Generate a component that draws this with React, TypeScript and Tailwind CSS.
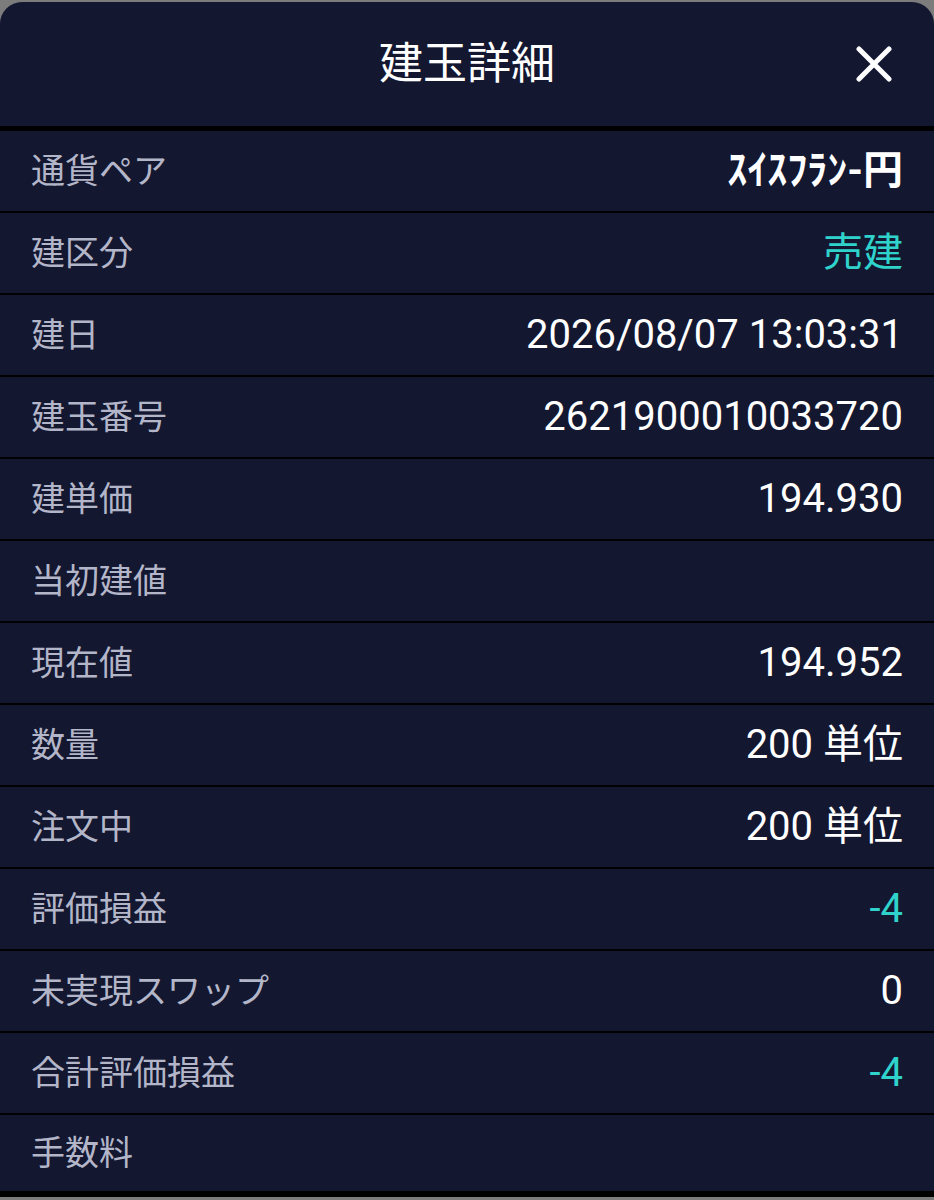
const rows: { label: string; value?: string; tone?: "white" | "cyan" | "pair" }[] = [
  { label: "通貨ペア", value: "ｽｲｽﾌﾗﾝ-円", tone: "pair" },
  { label: "建区分", value: "売建", tone: "cyan" },
  { label: "建日", value: "2026/08/07 13:03:31" },
  { label: "建玉番号", value: "2621900010033720" },
  { label: "建単価", value: "194.930" },
  { label: "当初建値" },
  { label: "現在値", value: "194.952" },
  { label: "数量", value: "200 単位" },
  { label: "注文中", value: "200 単位" },
  { label: "評価損益", value: "-4", tone: "cyan" },
  { label: "未実現スワップ", value: "0" },
  { label: "合計評価損益", value: "-4", tone: "cyan" },
  { label: "手数料" },
];

const jp = "font-['Roboto','Noto_Sans_CJK_JP',sans-serif]";

export default function App() {
  return (
    <div className="min-h-[1200px] w-[934px] bg-[#7c7c7c] pt-[2px] pb-[2px]">
      <div className="overflow-hidden rounded-t-[22px] bg-[#131730]">
        <div className="relative flex h-[129px] items-center justify-center border-b-[5px] border-black">
          <h1 className={`${jp} text-[44px] font-normal text-white`}>建玉詳細</h1>
          <button className="absolute right-[42px] top-[44px] text-white">
            <svg width="36" height="36" viewBox="0 0 36 36" fill="none">
              <path d="M3 3 L33 33 M33 3 L3 33" stroke="currentColor" strokeWidth="5" strokeLinecap="round" />
            </svg>
          </button>
        </div>
        {rows.map((r, i) => (
          <div
            key={r.label}
            className={`flex h-[82px] items-center justify-between px-[31px] ${
              i === rows.length - 1 ? "border-b-[6px]" : "border-b-2"
            } border-black`}
          >
            <span className={`${jp} text-[34px] text-[#b3b6c8]`}>{r.label}</span>
            {r.value && (
              <span
                className={`${jp} ${
                  r.tone === "cyan"
                    ? "text-[40px] text-[#2fd3cc]"
                    : r.tone === "pair"
                    ? "font-['Noto_Sans_CJK_JP',sans-serif] text-[40px] font-bold text-white"
                    : "text-[40px] text-white"
                }`}
              >
                {r.value}
              </span>
            )}
          </div>
        ))}
      </div>
    </div>
  );
}
